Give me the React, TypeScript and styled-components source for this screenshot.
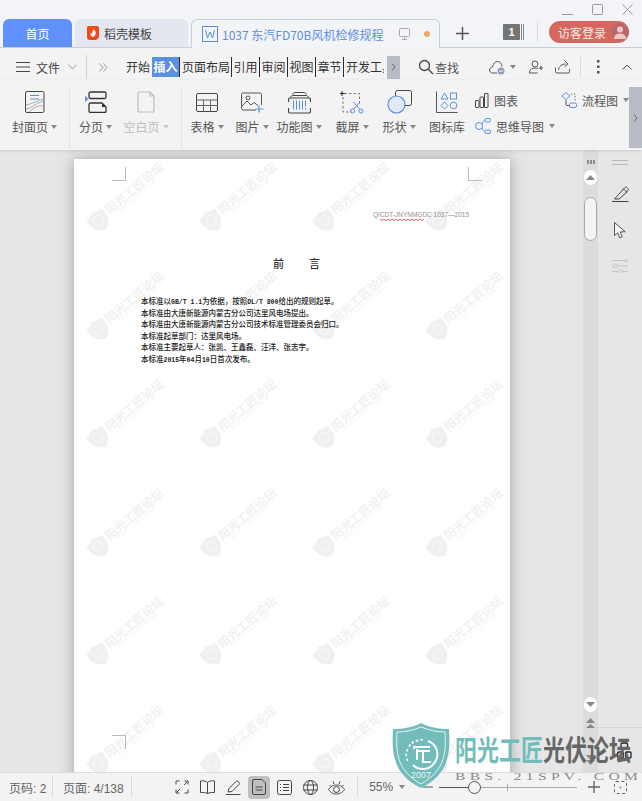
import React from "react";
import styled, { createGlobalStyle } from "styled-components";

const UI = `"Noto Sans CJK SC", "Noto Sans", sans-serif`;
const Global = createGlobalStyle`
  html, body { margin: 0; padding: 0; background: #f3f3f3; }
  * { box-sizing: border-box; }
`;

const Root = styled.div`
  position: relative; width: 642px; height: 801px; overflow: hidden;
  display: flex; flex-direction: column; font-family: ${UI}; font-size: 12px; color: #444; background: #f3f3f3;
`;
const Ico = styled.svg`flex: none; display: block; fill: none; stroke: currentColor; stroke-width: 1;`;

/* ---------- title bar ---------- */
const TitleBar = styled.header`
  height: 48px; flex: none; display: flex; align-items: flex-end; padding-left: 3px;
  background: #f3f4f7; border-bottom: 1px solid #c9cdd6;
`;
const HomeTab = styled.div`
  width: 69px; height: 28px; margin-right: 3px; border-radius: 6px 6px 0 0; background: #6090fb; color: #fff;
  display: flex; align-items: center; justify-content: center;
`;
const GrayTab = styled.div`
  width: 113px; height: 28px; margin-right: 3px; border-radius: 6px 6px 0 0; background: #e4e7ef; color: #444;
  display: flex; align-items: center; gap: 4px; padding-left: 11px;
`;
const DocTab = styled.div`
  width: 249px; height: 29px; margin-bottom: -1px; border: 1px solid #c9cdd6; border-bottom: none; border-radius: 6px 6px 0 0;
  background: #f3f4f7; color: #5b8ee6; display: flex; align-items: center; padding-left: 10px;
`;
const DocTitle = styled.span`margin-left: 4px; width: 177px; white-space: nowrap;`;
const Dot = styled.span`width: 6px; height: 6px; border-radius: 50%; background: #eea95e; margin-left: 14px;`;
const PlusSlot = styled.div`width: 44px; height: 28px; display: flex; align-items: center; justify-content: center; color: #555;`;
const RightZone = styled.div`flex: 1; height: 47px; display: flex; flex-direction: column;`;
const WinControls = styled.div`height: 20px; display: flex; align-items: center; padding: 0 9px 2px 0; justify-content: flex-end; gap: 19px; color: #999;`;
const AccountRow = styled.div`display: flex; align-items: center; margin-top: 1px;`;
const CountBadge = styled.div`
  width: 17px; height: 16px; margin-left: 19px; background: #757575; color: #fff; border-radius: 1px;
  font: 700 11px/16px "Liberation Sans", sans-serif; text-align: center;
`;
const CountBars = styled.div`width: 3px; height: 16px; margin-left: 1px; border-left: 1px solid #888; border-right: 1px solid #888;`;
const VDivider = styled.div<{ $h: number; $ml?: number; $mr?: number; $c?: string }>`
  width: 1px; flex: none; height: ${(p) => p.$h}px; margin-left: ${(p) => p.$ml ?? 0}px; margin-right: ${(p) => p.$mr ?? 0}px; background: ${(p) => p.$c ?? "#dcdcdc"};
`;
const LoginBtn = styled.div`
  width: 80px; height: 22px; border-radius: 11px; background: #d4675e; color: #f8e9e7; display: flex; align-items: center; padding-left: 9px; gap: 5px;
`;
const Avatar = styled.div`width: 18px; height: 18px; border-radius: 50%; background: #b9696a; display: flex; align-items: center; justify-content: center; color: #ecc9c7;`;

/* ---------- menu row ---------- */
const MenuBar = styled.nav`height: 32px; flex: none; display: flex; align-items: center; padding-top: 6px; background: #f3f3f3; color: #333;`;
const FileMenu = styled.div`display: flex; align-items: center; padding-left: 16px; width: 86px; color: #444;`;
const FileLabel = styled.span`margin: 0 8px 0 6px;`;
const TabSet = styled.div`display: flex; align-items: center; height: 20px; margin-left: 18px;`;
const MenuTab = styled.div<{ $active?: boolean; $sep?: boolean; $w: number; $pl?: number; $ml?: number }>`
  width: ${(p) => p.$w}px; height: 20px; line-height: 19px; white-space: nowrap; overflow: hidden; flex: none;
  padding-left: ${(p) => p.$pl ?? 0}px; margin-left: ${(p) => p.$ml ?? 0}px;
  text-align: ${(p) => (p.$pl === 3 ? "left" : "center")};
  color: ${(p) => (p.$active ? "#fff" : "#333")}; background: ${(p) => (p.$active ? "#5c8fe0" : "transparent")};
  font-weight: ${(p) => (p.$active ? 700 : 400)};
  box-shadow: ${(p) => (p.$sep ? "1px 0 0 #2b2b2b" : "none")};
`;
const TabMore = styled.div`width: 13px; height: 23px; background: #b8bcc4; display: flex; align-items: center; justify-content: center; color: #666; margin-left: 3px;`;
const SearchBox = styled.div`display: flex; align-items: center; gap: 1px; margin-left: 18px; color: #555; width: 71px;`;
const ToolIcons = styled.div`display: flex; align-items: center; color: #555;`;
const Gap = styled.span<{ $w?: number; $h?: number }>`display: block; flex: none; width: ${(p) => p.$w ?? 0}px; height: ${(p) => p.$h ?? 0}px;`;

/* ---------- ribbon ---------- */
const Ribbon = styled.section`
  height: 70px; flex: none; display: flex; align-items: flex-start; background: #f3f3f3; position: relative; z-index: 2;
  box-shadow: 0 1px 3px rgba(0,0,0,.12);
`;
const RibbonItem = styled.div<{ $w: number; $off?: boolean }>`
  width: ${(p) => p.$w}px; flex: none; padding-top: 10px; display: flex; flex-direction: column; align-items: center;
  color: ${(p) => (p.$off ? "#bdbdbd" : "#555")};
`;
const IconBox = styled.div`height: 24px; display: flex; align-items: center; justify-content: center;`;
const RibbonLabel = styled.div`margin-top: 5px; line-height: 16px; display: flex; align-items: center; gap: 3px; white-space: nowrap;`;
const Caret = styled.span<{ $c?: string }>`
  width: 0; height: 0; border: 3px solid transparent; border-top: 4px solid ${(p) => p.$c ?? "#888"}; border-bottom: 0; flex: none;
`;
const RibbonSep = styled.div<{ $ml?: number }>`width: 1px; height: 62px; margin-top: 6px; background: #e3e3e3; flex: none; margin-left: ${(p) => p.$ml ?? 0}px;`;
const SmallColumn = styled.div<{ $w: number }>`width: ${(p) => p.$w}px; flex: none; padding: 10px 0 0 1px; display: flex; flex-direction: column; gap: 6px;`;
const SmallRow = styled.div`height: 20px; display: flex; align-items: center; gap: 5px; color: #555; white-space: nowrap;`;
const RibbonExpand = styled.div`width: 13px; height: 61px; margin-top: 7px; background: #b8bcc4; flex: none; display: flex; align-items: center; justify-content: center; color: #666;`;

/* ---------- workspace ---------- */
const Workspace = styled.main`flex: 1; min-height: 0; display: flex; background: #e6e6e6;`;
const Canvas = styled.div`width: 583px; flex: none; overflow: hidden; padding: 9px 0 0 74px;`;
const Page = styled.article`
  position: relative; width: 436px; height: 700px; background: #fff; overflow: hidden;
  box-shadow: 0 0 14px rgba(0,0,0,.3); padding-top: 51px;
`;
const WatermarkTile = styled.div`
  position: absolute; width: 110px; display: flex; align-items: center; transform: rotate(-40deg); transform-origin: 12px 12px;
`;
const WmText = styled.div`display: flex; flex-direction: column; margin-left: 0; white-space: nowrap;`;
const WmTitle = styled.span`font-size: 12px; line-height: 12px; font-weight: 700; color: #f1f1f1;`;
const WmUrl = styled.span`font: 5px/6px "Liberation Serif", serif; letter-spacing: .9px; color: #f1f1f1; margin-left: 9px;`;
const Crop = styled.div<{ $x: number; $y: number; $tb: "top" | "bottom"; $lr: "left" | "right" }>`
  position: absolute; left: ${(p) => p.$x}px; top: ${(p) => p.$y}px; width: 14px; height: 14px;
  border-${(p) => p.$tb}: 1px solid #bbb; border-${(p) => p.$lr}: 1px solid #bbb;
`;
const CodeLine = styled.div`
  position: relative; height: 10px; font: 6.5px/10px "Liberation Sans", sans-serif; color: #8b8f96; text-align: right; padding-right: 41px;
`;
const Squiggle = styled.svg`position: absolute; left: 306px; top: 8px; overflow: visible;`;
const Heading = styled.h1`
  position: relative; margin: 35px 0 0; padding-left: 199px; display: flex; gap: 25px; font-size: 11px; line-height: 16px; font-weight: 500; color: #333;
`;
const Body = styled.div`position: relative; margin-top: 24px; padding-left: 67px; font-size: 7.5px; line-height: 11.5px; font-weight: 500; color: #222; white-space: nowrap;`;
const Latin = styled.span`font: 700 6.5px "Liberation Mono", monospace;`;

const ScrollTrack = styled.div`width: 15px; flex: none; background: #dcdcdc; display: flex; flex-direction: column; align-items: center; padding-top: 10px; color: #888;`;
const ScrollBtn = styled.div`width: 13px; height: 15px; border-radius: 7px; background: #fff; display: flex; align-items: center; justify-content: center; flex: none;`;
const ScrollThumb = styled.div`width: 13px; height: 44px; margin-top: 12px; border-radius: 7px; background: #f3f3f3; border: 1px solid #a9a9a9; flex: none;`;
const Grow = styled.div`flex: 1;`;
const SideBar = styled.aside`flex: 1; display: flex; flex-direction: column; align-items: center; padding-top: 10px; color: #555;`;
const SideSlot = styled.div<{ $mt: number; $pl?: number }>`margin-top: ${(p) => p.$mt}px; padding-left: ${(p) => p.$pl ?? 0}px; display: flex; justify-content: center; width: 100%;`;
const SideLine = styled.div`width: 100%; height: 1px; background: #d6d6d6;`;

/* ---------- status bar ---------- */
const StatusBar = styled.footer`
  height: 29px; flex: none; background: #f3f3f3; border-top: 1px solid #dcdcdc; display: flex; align-items: center; color: #666;
  font-family: "Liberation Sans", ${UI}; font-size: 12px; position: relative;
`;
const StatusText = styled.div<{ $w: number; $pl: number }>`width: ${(p) => p.$w}px; padding-left: ${(p) => p.$pl}px; white-space: nowrap;`;
const StatusIcon = styled.div<{ $active?: boolean; $ml?: number }>`
  width: 22px; height: 23px; margin-left: ${(p) => p.$ml ?? 3.7}px; border-radius: 4px; flex: none; color: #444;
  background: ${(p) => (p.$active ? "#bfbfbf" : "transparent")}; display: flex; align-items: center; justify-content: center;
`;
const Zoom = styled.div`display: flex; align-items: center; gap: 6px; margin-left: 11px; width: 52px; color: #666;`;
const Slider = styled.div`position: relative; width: 138px; height: 1px; background: #aaa; margin-left: 6px; flex: none;`;
const SliderFill = styled.div`width: 35px; height: 1px; background: #555;`;
const Knob = styled.div`position: absolute; left: 29px; top: -6px; width: 13px; height: 13px; border-radius: 50%; background: #f3f3f3; border: 1px solid #555;`;
const Tick = styled.div`position: absolute; left: 68px; top: -3px; width: 1px; height: 7px; background: #aaa;`;

/* ---------- logo overlay ---------- */
const Logo = styled.div`position: absolute; left: 392px; top: 723px; display: flex; z-index: 5; pointer-events: none;`;
const LogoText = styled.div`margin-left: 5px; display: flex; flex-direction: column;`;
const LogoTitle = styled.div`
  font-size: 22px; line-height: 24px; font-weight: 700; white-space: nowrap; margin-top: 9px; color: #666;
  transform: scaleY(1.3); transform-origin: top left;
`;
const Teal = styled.span`color: #72bdbb;`;
const LogoUrl = styled.div`
  font: 400 12px/12px "Liberation Serif", serif; letter-spacing: 3.3px; color: #8a8a8a; margin-top: 15px; white-space: nowrap; width: 134px;
  transform: scale(1.3, .85); transform-origin: center left;
`;

/* ---------- icons ---------- */
const B = "#5a8fe3";
const WpsLogo = () => (
  <Ico width="14" height="16" viewBox="0 0 14 16" style={{ stroke: "none" }}>
    <path d="M1 2.500C1 1.500 2 1 3 1h8c1.500 0 2 1 2 2v8c0 2-2 4-4 4H4c-2 0-3-1-3-3z" fill="#ef4a18" />
    <path d="M7 12c-2.500-.5-3-3-2-5 0 1 .5 2 1.200 2.200C6 7 7 5 8.500 3.800 8 6 9 6.800 9.800 6.500 10 9 9 11.500 7 12z" fill="#fff" />
  </Ico>
);
const WDoc = () => (
  <Ico width="16" height="16" viewBox="0 0 16 16" style={{ color: B }}>
    <rect x=".5" y=".5" width="15" height="15" />
    <path d="M3.500 4l2 8 2.500-6 2.500 6 2-8" />
  </Ico>
);
const Monitor = () => (
  <Ico width="11" height="12" viewBox="0 0 11 12" style={{ color: "#aaa" }}>
    <rect x=".5" y=".5" width="10" height="8" rx="1" /><path d="M5.500 8.500V11M3 11.500h5" />
  </Ico>
);
const Hamb = () => <Ico width="14" height="10" viewBox="0 0 14 10"><path d="M0 .5h14M0 5h14M0 9.500h14" /></Ico>;
const Chevron = ({ up, w = 9, c = "#888" }: { up?: boolean; w?: number; c?: string }) => (
  <Ico width={w} height="6" viewBox="0 0 10 6" style={{ color: c }}><path d={up ? "M.5 5.500L5 1l4.500 4.500" : "M.5.500L5 5l4.500-4.500"} /></Ico>
);
const RightArrow = () => <Ico width="5" height="8" viewBox="0 0 5 8"><path d="M1 .5L4 4 1 7.500" /></Ico>;

const Cover = () => (
  <Ico width="20" height="22" viewBox="0 0 20 22">
    <rect x=".5" y=".5" width="18.500" height="21" rx="1.500" stroke="#444" />
    <path d="M5 4.500h9M5 8h9" stroke={B} />
    <path d="M1 14c5-1 9-3 17-6M1 18c6-1 10-6 17-8M4 21c3-3 8-7 14-6" stroke="#aaa" />
  </Ico>
);
const Paging = () => (
  <Ico width="22" height="22" viewBox="0 0 22 22" style={{ color: "#333", strokeWidth: 1.300 }}>
    <path d="M4 6V2.500A1.500 1.500 0 0 1 5.500 1h14A1.500 1.500 0 0 1 21 2.500V6A1.500 1.500 0 0 1 19.500 7.500h-14A1.500 1.500 0 0 1 4 6z" />
    <path d="M4 13.500A1.500 1.500 0 0 1 5.500 12H17l4 4v4.500a1 1 0 0 1-1 1H5.500A1.500 1.500 0 0 1 4 20z" />
    <path d="M0 5l3.500 3L0 11z" fill={B} stroke="none" />
    <path d="M17 12l4 4h-4z" fill="#333" stroke="none" />
  </Ico>
);
const Blank = () => (
  <Ico width="18" height="22" viewBox="0 0 18 22" style={{ color: "#bdbdbd", strokeWidth: 1.200 }}>
    <path d="M1 2a1 1 0 0 1 1-1h11l4 4v15a1 1 0 0 1-1 1H2a1 1 0 0 1-1-1zM13 1v4h4" />
  </Ico>
);
const TableI = () => (
  <Ico width="22" height="19" viewBox="0 0 22 19" style={{ color: "#444" }}>
    <rect x=".5" y=".5" width="21" height="18" rx="1.500" /><path d="M.5 7h21M.5 12.500h21M7.500 7v11.500M14.500 7v11.500" stroke="#666" />
  </Ico>
);
const Picture = () => (
  <Ico width="23" height="21" viewBox="0 0 23 21" style={{ color: "#555" }}>
    <path d="M15 18H2a1.500 1.500 0 0 1-1.500-1.500v-14A1.500 1.500 0 0 1 2 1h17a1.500 1.500 0 0 1 1.500 1.500V13" />
    <circle cx="7" cy="6" r="2" /><path d="M1 14l5-5 4 4 3-2.500 4 3" />
    <path d="M18 13.500v7M14.500 17h8" stroke={B} strokeWidth="1.200" />
  </Ico>
);
const Func = () => (
  <Ico width="23" height="23" viewBox="0 0 23 23" style={{ color: "#444" }}>
    <path d="M5 3.500C5 2 6 1.500 7 1.500h9c1 0 2 .5 2 2M2.500 6.500C3 5 4 4.500 5 4.500h13c1 0 2 .5 2.500 2" />
    <path d="M.5 11V8.500A1.500 1.500 0 0 1 2 7h19a1.500 1.500 0 0 1 1.500 1.500V11M.5 17v3.500A1.500 1.500 0 0 0 2 22h19a1.500 1.500 0 0 0 1.500-1.500V17" strokeWidth="1.200" />
    <path d="M5.500 9.500v9M8.500 9.500v9M11.500 9.500v9M14.500 9.500v9M17.500 9.500v6M17.500 17v1.500" stroke={B} />
  </Ico>
);
const Shot = () => (
  <Ico width="24" height="23" viewBox="0 0 24 23" style={{ color: "#555" }}>
    <path d="M2 0v5M0 2.500h5" stroke="#222" />
    <path d="M4.500 2.500h15v10M3 6v15h9" strokeDasharray="2.500 2" stroke="#777" />
    <circle cx="12.500" cy="20" r="2" stroke={B} /><circle cx="21" cy="20" r="2" stroke={B} />
    <path d="M13.500 18.500L20 11M20 18.500L13.500 11" stroke={B} />
  </Ico>
);
const Shapes = () => (
  <Ico width="25" height="24" viewBox="0 0 25 24">
    <rect x="8.500" y=".5" width="16" height="15" rx="2" stroke="#444" />
    <circle cx="9.500" cy="14.500" r="8.500" fill="#e3e9f7" stroke={B} strokeWidth="1.200" />
  </Ico>
);
const Library = () => (
  <Ico width="22" height="23" viewBox="0 0 22 23">
    <path d="M.5.500v21h21" stroke="#555" />
    <path d="M8.500 2l3.500 6H5z" stroke={B} />
    <rect x="14.500" y="2" width="6" height="6" stroke={B} />
    <path d="M8.500 11l3.500 3.500-3.500 3.500L5 14.500z" stroke={B} />
    <circle cx="17.500" cy="14.500" r="3.300" stroke={B} />
  </Ico>
);
const Bars = () => (
  <Ico width="14" height="15" viewBox="0 0 14 15" style={{ color: "#444" }}>
    <rect x=".5" y="7.500" width="3.500" height="7" rx=".5" /><rect x="5" y="4" width="3.500" height="10.500" rx=".5" /><rect x="9.500" y=".5" width="3.500" height="14" rx=".5" />
  </Ico>
);
const Mind = () => (
  <Ico width="16" height="16" viewBox="0 0 16 16" style={{ color: B }}>
    <circle cx="4" cy="8" r="3.500" /><rect x="10" y=".5" width="5.500" height="3.500" rx="1.500" /><rect x="10" y="12" width="5.500" height="3.500" rx="1.500" />
    <path d="M7 6c1-2 1.500-3.500 3-4M7 10c1 2 1.500 3.500 3 4" />
  </Ico>
);
const Flow = () => (
  <Ico width="16" height="16" viewBox="0 0 16 16" style={{ color: B }}>
    <path d="M5 .5L9 4 5 7.500 1 4z" /><rect x="8.500" y="11" width="7" height="4.500" rx="1.500" />
    <path d="M10 2h4v7" strokeDasharray="1.500 1.500" stroke="#777" /><path d="M5 8v4.500c0 .5.500 1 1 1h2.500" stroke="#555" />
  </Ico>
);
const Search = () => (
  <Ico width="16" height="16" viewBox="0 0 16 16" style={{ color: "#444", strokeWidth: 1.300 }}><circle cx="6.500" cy="6.500" r="5" /><path d="M10 10l5 5" /></Ico>
);
const Cloud = () => (
  <Ico width="17" height="15" viewBox="0 0 17 15" style={{ color: "#555" }}>
    <path d="M8 13H3.500C1.800 13 .5 11.700 .5 10s1.300-3 3-3C4 4 6 1.500 8.500 1.500S13 4 13 6.500" />
    <circle cx="12" cy="11" r="3.500" fill="#8e9cb5" stroke="none" /><path d="M10 11h4" stroke="#fff" />
  </Ico>
);
const PersonAdd = () => (
  <Ico width="15" height="14" viewBox="0 0 15 14" style={{ color: "#555" }}>
    <circle cx="6" cy="4" r="3" /><path d="M.5 13v-1c0-2.500 3-4 5.500-4 1 0 2 .2 3 .6M.5 13h8" /><path d="M12 6v4M10 8h4" />
  </Ico>
);
const Share = () => (
  <Ico width="15" height="14" viewBox="0 0 15 14" style={{ color: "#555" }}>
    <path d="M.5 7.500v4A1.500 1.500 0 0 0 2 13h11a1.500 1.500 0 0 0 1.500-1.500V9M3.500 10C4 6 7 4 11 4M9.500.5L13 4 9.500 7" />
  </Ico>
);
const VDots = () => (
  <Ico width="3" height="14" viewBox="0 0 3 14" style={{ stroke: "none", fill: "#555" }}><rect width="2.500" height="2.500" /><rect y="5.500" width="2.500" height="2.500" /><rect y="11" width="2.500" height="2.500" /></Ico>
);
const Shield = () => (
  <Ico width="24" height="24" viewBox="0 0 24 24" style={{ stroke: "none" }}>
    <path d="M12 1c3 2 6 3 10 3 0 8 0 15-10 19C2 19 2 12 2 4c4 0 7-1 10-3z" fill="#f0f0f0" />
    <circle cx="12" cy="11" r="5" stroke="#f8f8f8" fill="none" />
  </Ico>
);
const Pen = () => (
  <Ico width="17" height="16" viewBox="0 0 17 16" style={{ color: "#444" }}>
    <path d="M0 15.500h16.500M2.500 13L11.500 3l3.500 3-8 7z" /><path d="M11 3.500L13 1.500c.6-.6 1.500-.5 2 .1l1 1c.5.6.4 1.300-.1 1.800L14 6.500" />
  </Ico>
);
const Cursor = () => (
  <Ico width="12" height="17" viewBox="0 0 12 17" style={{ color: "#555" }}>
    <path d="M.5.500v13l3.200-2.700 2 5 2.500-1-2-4.800 5-.3z" fill="#f3f3f3" />
  </Ico>
);
const Tune = () => (
  <Ico width="16" height="14" viewBox="0 0 16 14" style={{ color: "#c6c6c6" }}>
    <path d="M0 1.500h12M0 7h1M6 7h10M0 12.500h6M10 12.500h6" /><circle cx="14" cy="1.500" r="1.500" /><circle cx="3.500" cy="7" r="2" /><circle cx="8" cy="12.500" r="2" />
  </Ico>
);
const Expand = () => (
  <Ico width="14" height="14" viewBox="0 0 14 14"><path d="M1 4.500V1h3.500M9.500 1H13v3.500M13 9.500V13H9.500M4.500 13H1V9.500M1.500 12.500L5 9M12.500 1.500L9 5" /></Ico>
);
const Book = () => <Ico width="15" height="14" viewBox="0 0 15 14"><path d="M7.500 2.500v11M7.500 2.500C6 1 3 .5.500 1v11.500c3 0 5 0 7 1 2-1 4-1 7-1V1C12 .5 9 1 7.500 2.500z" /></Ico>;
const Markup = () => <Ico width="15" height="15" viewBox="0 0 15 15"><path d="M0 14.500h14.500M2 12l1-3.500L10 1.500c.6-.6 1.500-.6 2.200 0l.8.8c.6.600.6 1.500 0 2.100L6 11.500z" /></Ico>;
const DocI = () => <Ico width="14" height="16" viewBox="0 0 14 16"><path d="M.5 2A1.500 1.500 0 0 1 2 .5h8L13.500 4v10a1.500 1.500 0 0 1-1.500 1.500H2A1.500 1.500 0 0 1 .5 14zM3.500 8h7M3.500 11h7" /></Ico>;
const Outline = () => <Ico width="15" height="15" viewBox="0 0 15 15"><rect x=".5" y=".5" width="14" height="14" rx="2" /><path d="M3 4.500h1M6 4.500h6M3 7.500h1M6 7.500h6M3 10.500h1M6 10.500h6" /></Ico>;
const Globe = () => <Ico width="15" height="15" viewBox="0 0 15 15"><circle cx="7.500" cy="7.500" r="7" /><ellipse cx="7.500" cy="7.500" rx="3" ry="7" /><path d="M.5 5h14M.5 10h14" /></Ico>;
const Eye = () => <Ico width="17" height="15" viewBox="0 0 17 15"><path d="M.5 9.500C3 6 5.500 5 8.500 5s5.500 1 8 4.500c-2.500 3.500-5 4.500-8 4.500s-5.500-1-8-4.500z" /><circle cx="8.500" cy="9.500" r="3" /><path d="M1.500 5L3 6.500M5 1.500L6 4M12 1.500L11 4M15.500 5L14 6.500" /></Ico>;
const Fit = () => <Ico width="13" height="13" viewBox="0 0 13 13" strokeDasharray="3 2.500"><rect x=".5" y=".5" width="12" height="12" rx="1.500" /><circle cx="6.500" cy="6.500" r=".5" /></Ico>;
const PlusI = ({ s = 13 }: { s?: number }) => <Ico width={s} height={s} viewBox="0 0 13 13" style={{ strokeWidth: 1.500 }}><path d="M6.500 0v13M0 6.500h13" /></Ico>;
const Tri = ({ d = false, dbl = false }: { d?: boolean; dbl?: boolean }) => (
  <Ico width="9" height={dbl ? 10 : 5} viewBox={dbl ? "0 0 9 10" : "0 0 9 5"} style={{ stroke: "none", fill: "#888" }}>
    <path d={d ? "M0 0h9L4.500 5z" : "M4.500 0L9 5H0z"} />{dbl && <path d={d ? "M0 5h9L4.500 10z" : "M0 10h9L4.500 6z"} />}
  </Ico>
);
const Dense = () => (
  <Ico width="15" height="17" viewBox="0 0 15 17" style={{ color: "#222", strokeWidth: 1.300 }}>
    <rect x="4" y="1" width="6.500" height="5" rx="1" /><rect x=".7" y="10" width="5.500" height="6" rx="1" /><rect x="8.500" y="10" width="5.500" height="6" rx="1" />
  </Ico>
);
const TopDots = () => (
  <Ico width="8" height="5" viewBox="0 0 8 5" style={{ stroke: "none", fill: "#8a8a8a" }}><rect width="2" height="4" /><rect x="3" width="2" height="4" /><rect x="6" width="2" height="4" /></Ico>
);
const BigShield = () => (
  <Ico width="58" height="65" viewBox="0 0 58 65" style={{ stroke: "none" }}>
    <path d="M29 0c8 4 17 6 28 6 1 22 2 44-28 59C-1 50 0 28 1 6c11 0 20-2 28-6z" fill="#72bdbb" />
    <path d="M29 4c8 3 15 5 24 5 1 19 1 38-24 52C4 47 4 28 5 9c9 0 16-2 24-5z" fill="none" stroke="#e6f3f2" strokeWidth="1" />
    <path d="M36 18a14 14 0 0 1 7 21 14 14 0 0 1-22 3" fill="none" stroke="#fff" strokeWidth="2" />
    <path d="M17 22l1.500 1M20 19l1.500 1M24.500 17l1 1.500M29.500 16v1.500M14.500 27l1.500.5M13.500 32h1.500M14.500 37l1.500-.5" stroke="#fff" strokeWidth="2.500" fill="none" />
    <path d="M38 24H22v2M25 26v11M25 28h13M31 28v11h8" fill="none" stroke="#fff" strokeWidth="2" />
    <text x="29" y="55" textAnchor="middle" fontSize="9" fontFamily='"Liberation Sans", sans-serif' fill="#fff" opacity=".85">2007</text>
  </Ico>
);

const WM_COLS = [0, 1, 2, 3];
const WM_ROWS = [0, 1, 2, 3, 4, 5];

export default function App() {
  return (
    <Root>
      <Global />
      <TitleBar>
        <HomeTab>首页</HomeTab>
        <GrayTab><WpsLogo />稻壳模板</GrayTab>
        <DocTab>
          <WDoc /><DocTitle>1037 东汽FD70B风机检修规程</DocTitle><Monitor /><Dot />
        </DocTab>
        <PlusSlot><PlusI /></PlusSlot>
        <RightZone>
          <WinControls>
            <Ico width="11" height="11" viewBox="0 0 11 11"><path d="M0 10.500h11" /></Ico>
            <Ico width="11" height="11" viewBox="0 0 11 11"><rect x=".5" y=".5" width="10" height="10" rx="1" /></Ico>
            <Ico width="11" height="11" viewBox="0 0 11 11"><path d="M.5.500l10 10M10.500.500l-10 10" /></Ico>
          </WinControls>
          <AccountRow>
            <CountBadge>1</CountBadge><CountBars />
            <VDivider $h={20} $ml={13} $mr={11} />
            <LoginBtn>访客登录
              <Avatar>
                <Ico width="14" height="14" viewBox="0 0 14 14" style={{ stroke: "none", fill: "currentColor" }}>
                  <circle cx="7" cy="4.500" r="3" /><path d="M1 14c0-4 3-5.500 6-5.500s6 1.500 6 5.500z" />
                </Ico>
              </Avatar>
            </LoginBtn>
          </AccountRow>
        </RightZone>
      </TitleBar>

      <MenuBar>
        <FileMenu>
          <Hamb />
          <FileLabel>文件</FileLabel>
          <Chevron />
        </FileMenu>
        <VDivider $h={24} $mr={12} $c="#cfcfcf" />
        <Ico width="9" height="9" viewBox="0 0 9 9" style={{ color: "#999" }}><path d="M.5.500L4 4.500.5 8.500M4.500.500L8 4.500 4.500 8.500" /></Ico>
        <TabSet>
          <MenuTab $w={24}>开始</MenuTab>
          <MenuTab $w={27} $active $sep $ml={2}>插入</MenuTab>
          <MenuTab $w={51} $sep $pl={1} $ml={1}>页面布局</MenuTab>
          <MenuTab $w={28} $sep $pl={1}>引用</MenuTab>
          <MenuTab $w={28} $sep $pl={1}>审阅</MenuTab>
          <MenuTab $w={28} $sep $pl={1}>视图</MenuTab>
          <MenuTab $w={28} $sep $pl={1}>章节</MenuTab>
          <MenuTab $w={41} $pl={3}>开发工具</MenuTab>
          <TabMore><RightArrow /></TabMore>
        </TabSet>
        <SearchBox><Search />查找</SearchBox>
        <ToolIcons>
          <Cloud /><Gap $w={4} /><Caret />
          <Gap $w={13} /><PersonAdd />
          <Gap $w={11} /><Share />
          <VDivider $h={20} $ml={10} $mr={16} />
          <VDots />
          <Gap $w={20} />
          <Chevron up w={14} c="#555" />
        </ToolIcons>
      </MenuBar>

      <Ribbon>
        <RibbonItem $w={69}><IconBox><Cover /></IconBox><RibbonLabel>封面页<Caret /></RibbonLabel></RibbonItem>
        <RibbonSep />
        <RibbonItem $w={51}><IconBox><Paging /></IconBox><RibbonLabel>分页<Caret /></RibbonLabel></RibbonItem>
        <RibbonItem $w={50} $off><IconBox><Blank /></IconBox><RibbonLabel>空白页<Caret $c="#ccc" /></RibbonLabel></RibbonItem>
        <RibbonSep $ml={10} />
        <RibbonItem $w={50}><IconBox><TableI /></IconBox><RibbonLabel>表格<Caret /></RibbonLabel></RibbonItem>
        <RibbonItem $w={40}><IconBox><Picture /></IconBox><RibbonLabel>图片<Caret /></RibbonLabel></RibbonItem>
        <RibbonItem $w={54}><IconBox><Func /></IconBox><RibbonLabel>功能图<Caret /></RibbonLabel></RibbonItem>
        <RibbonItem $w={52}><IconBox><Shot /></IconBox><RibbonLabel>截屏<Caret /></RibbonLabel></RibbonItem>
        <RibbonItem $w={42}><IconBox><Shapes /></IconBox><RibbonLabel>形状<Caret /></RibbonLabel></RibbonItem>
        <RibbonItem $w={54}><IconBox><Library /></IconBox><RibbonLabel>图标库</RibbonLabel></RibbonItem>
        <SmallColumn $w={86}>
          <SmallRow><Bars />图表</SmallRow>
          <SmallRow><Mind />思维导图<Caret /></SmallRow>
        </SmallColumn>
        <SmallColumn $w={69}>
          <SmallRow><Flow />流程图<Caret /></SmallRow>
        </SmallColumn>
        <RibbonExpand><RightArrow /></RibbonExpand>
      </Ribbon>

      <Workspace>
        <Canvas>
          <Page>
            {WM_ROWS.map((r) =>
              WM_COLS.map((c) => (
                <WatermarkTile key={`${r}-${c}`} style={{ left: 13 + c * 113, top: 50 + r * 108.6 }}>
                  <Shield />
                  <WmText>
                    <WmTitle>阳光工匠论坛</WmTitle>
                    <WmUrl>BBS.21SPV.COM</WmUrl>
                  </WmText>
                </WatermarkTile>
              ))
            )}
            <Crop $x={38} $y={8} $tb="bottom" $lr="right" />
            <Crop $x={394} $y={8} $tb="bottom" $lr="left" />
            <Crop $x={38} $y={576} $tb="top" $lr="right" />
            <CodeLine>
              Q/CDT-JNYNMGDC 1037—2015
              <Squiggle width="47" height="3" viewBox="0 0 47 3">
                <path d="M0 1l2 1.500 2-1.500 2 1.500 2-1.500 2 1.500 2-1.500 2 1.500 2-1.500 2 1.500 2-1.500 2 1.500 2-1.500 2 1.500 2-1.500 2 1.500 2-1.500 2 1.500 2-1.500 2 1.500 2-1.500 2 1.500 2-1.500" fill="none" stroke="#d43a3a" strokeWidth=".8" />
              </Squiggle>
            </CodeLine>
            <Heading><span>前</span><span>言</span></Heading>
            <Body>
              <div>本标准以<Latin>GB/T 1.1</Latin>为依据，按照<Latin>DL/T 800</Latin>给出的规则起草。</div>
              <div>本标准由大唐新能源内蒙古分公司达里风电场提出。</div>
              <div>本标准由大唐新能源内蒙古分公司技术标准管理委员会归口。</div>
              <div>本标准起草部门：达里风电场。</div>
              <div>本标准主要起草人：张凯、王鑫磊、汪洋、张志宇。</div>
              <div>本标准<Latin>2015</Latin>年<Latin>04</Latin>月<Latin>10</Latin>日首次发布。</div>
            </Body>
          </Page>
        </Canvas>
        <ScrollTrack>
          <TopDots />
          <Gap $h={5} />
          <ScrollBtn><Tri /></ScrollBtn>
          <ScrollThumb />
          <Grow />
          <ScrollBtn><Tri d /></ScrollBtn>
          <Gap $h={6} />
          <Tri dbl />
          <Gap $h={27} />
          <Tri d dbl />
          <Gap $h={7} />
        </ScrollTrack>
        <SideBar>
          <Ico width="16" height="5" viewBox="0 0 16 5" style={{ color: "#bbb" }}><path d="M0 .5h16M0 4.500h16" /></Ico>
          <SideSlot $mt={21}><Pen /></SideSlot>
          <SideSlot $mt={20}><Cursor /></SideSlot>
          <SideSlot $mt={20}><Tune /></SideSlot>
          <Grow />
          <SideLine />
          <SideSlot $mt={14} $pl={8}><Dense /></SideSlot>
          <Gap $h={13} />
        </SideBar>
      </Workspace>

      <StatusBar>
        <StatusText $w={52} $pl={9}>页码: 2</StatusText>
        <VDivider $h={22} />
        <StatusText $w={78} $pl={10}>页面: 4/138</StatusText>
        <VDivider $h={22} />
        <StatusIcon $ml={39}><Expand /></StatusIcon>
        <StatusIcon><Book /></StatusIcon>
        <StatusIcon><Markup /></StatusIcon>
        <StatusIcon $active><DocI /></StatusIcon>
        <StatusIcon><Outline /></StatusIcon>
        <StatusIcon><Globe /></StatusIcon>
        <StatusIcon><Eye /></StatusIcon>
        <VDivider $h={22} $ml={10} />
        <Zoom>55%<Caret /></Zoom>
        <Ico width="10" height="2" viewBox="0 0 10 2" style={{ color: "#555", marginLeft: 2 }}><path d="M0 1h10" /></Ico>
        <Slider><SliderFill /><Tick /><Knob /></Slider>
        <Gap $w={11} />
        <PlusI s={12} />
        <Gap $w={14} />
        <Fit />
      </StatusBar>

      <Logo>
        <BigShield />
        <LogoText>
          <LogoTitle><Teal>阳光工匠</Teal>光伏论坛</LogoTitle>
          <LogoUrl>BBS. 21SPV. COM</LogoUrl>
        </LogoText>
      </Logo>
    </Root>
  );
}
